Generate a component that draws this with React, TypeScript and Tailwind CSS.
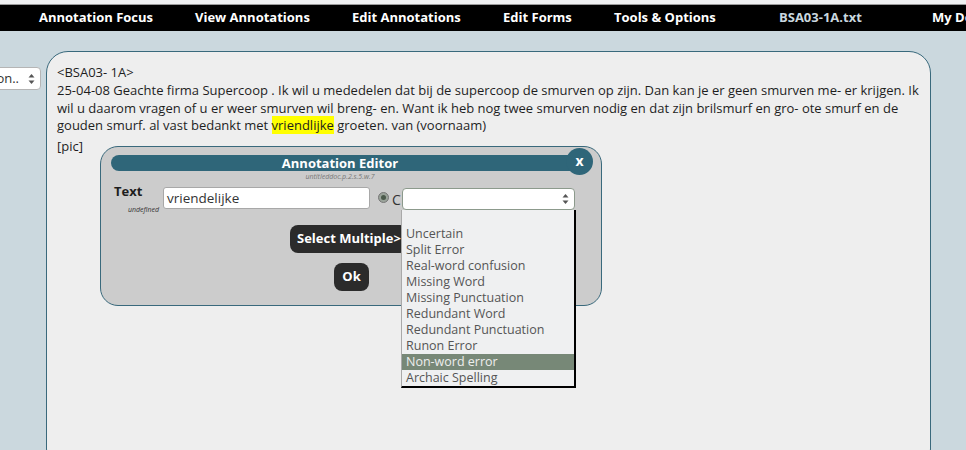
import React from 'react';

// setas do select (triângulo pra cima e pra baixo)
const Arrows = () => (
  <svg width="7" height="12" viewBox="0 0 7 12">
    <path d="M3.5 1 L6.5 4.5 L0.5 4.5 Z" fill="#555" />
    <path d="M3.5 11 L6.5 7.5 L0.5 7.5 Z" fill="#555" />
  </svg>
);

const navItems = [
  { label: 'Annotation Focus', w: 'w-[156px]', color: 'text-white' },
  { label: 'View Annotations', w: 'w-[157px]', color: 'text-white' },
  { label: 'Edit Annotations', w: 'w-[151px]', color: 'text-white' },
  { label: 'Edit Forms', w: 'w-[111px]', color: 'text-white' },
  { label: 'Tools & Options', w: 'w-[165px]', color: 'text-white' },
  { label: 'BSA03-1A.txt', w: 'w-[153px]', color: 'text-[#c9d7df]' },
  { label: 'My Documents', w: 'w-[120px]', color: 'text-white' },
];

const opcoes = [
  'Uncertain',
  'Split Error',
  'Real-word confusion',
  'Missing Word',
  'Missing Punctuation',
  'Redundant Word',
  'Redundant Punctuation',
  'Runon Error',
  'Non-word error',
  'Archaic Spelling',
];

export default function App() {
  return (
    <div className="relative w-[966px] h-[450px] overflow-hidden bg-[#cbd8de] text-[13px] text-[#1e1e1e] font-[family-name:'Open_Sans',sans-serif]">
      {/* barra de navegação */}
      <div className="h-[5px] bg-[#eff0f1] border-b border-[#9a9a9a]" />
      <div className="h-[26px] bg-black flex items-center pl-[39px] whitespace-nowrap overflow-hidden">
        {navItems.map((n) => (
          <div key={n.label} className={`${n.w} shrink-0 font-bold ${n.color}`}>
            {n.label}
          </div>
        ))}
      </div>

      <div className="flex">
        {/* coluna esquerda com o select cortado */}
        <div className="w-[46px] shrink-0 overflow-hidden pt-[36px]">
          <div className="ml-[-20px] w-[61px] h-[23px] bg-white border border-[#b5b5b5] rounded-[4px] flex items-center justify-end pr-[5px] gap-[9px] text-[#333]">
            <span>on..</span>
            <Arrows />
          </div>
        </div>

        {/* painel principal */}
        <div className="mt-[20px] w-[885px] h-[420px] shrink-0 bg-[#eeeeee] border border-[#39697c] rounded-[22px] pt-[11px] pl-[10px]">
          <div className="leading-[18px]">&lt;BSA03- 1A&gt;</div>
          <div className="leading-[17.5px] whitespace-nowrap mt-[1px]">
            <div>25-04-08 Geachte firma Supercoop . Ik wil u mededelen dat bij de supercoop de smurven op zijn. Dan kan je er geen smurven me- er krijgen. Ik</div>
            <div>wil u daarom vragen of u er weer smurven wil breng- en. Want ik heb nog twee smurven nodig en dat zijn brilsmurf en gro- ote smurf en de</div>
            <div>
              gouden smurf. al vast bedankt met <span className="bg-[#ffff00]">vriendlijke</span> groeten. van (voornaam)
            </div>
          </div>
          <div className="leading-[18px] mt-[2px]">[pic]</div>
        </div>
      </div>

      {/* editor de anotação (sobreposto) */}
      <div className="absolute left-[100px] top-[146px] w-[502px] h-[160px] bg-[#cccccc] border border-[#39697c] rounded-[18px] px-[10px] pt-[8px]">
        <div className="relative h-[16px] bg-[#2f6679] rounded-[8px] flex items-center justify-center pr-[22px]">
          <span className="text-white font-bold leading-none">Annotation Editor</span>
          <div className="absolute right-[-2px] top-[-7px] w-[27px] h-[27px] rounded-full bg-[#2f6679] flex items-center justify-center text-white font-bold text-[14px] leading-none pb-[2px]">
            x
          </div>
        </div>
        <div className="text-center pr-[22px] italic text-[7px] text-[#777] leading-[10px] mt-[1px]">untitleddoc.p.2.s.5.w.7</div>

        <div className="flex mt-[4px]">
          <div className="w-[52px] shrink-0 pl-[3px]">
            <div className="font-bold text-[13px] leading-[17px] mt-[-3px]">Text</div>
            <div className="italic text-[7px] text-[#333] text-right pr-[4px] mt-[5px]">undefined</div>
          </div>
          <div className="w-[207px] h-[22px] mt-[1px] bg-white border border-[#a8a8a8] rounded-[3px] flex items-center pl-[3px] text-[13.5px] text-[#333]">
            vriendelijke
          </div>
          <div className="ml-[8px] mt-[6px] w-[11px] h-[11px] rounded-full bg-[#9aa39a] border border-[#777] flex items-center justify-center">
            <div className="w-[5px] h-[5px] rounded-full bg-[#4b5a4b]" />
          </div>
          <div className="ml-[3px] mt-[3px] w-[9px] overflow-hidden text-[#333] text-[14px]">C</div>
        </div>

        <div className="flex flex-col items-start mt-[9px]">
          <div className="h-[28px] ml-[179px] bg-[#2b2b2b] rounded-[8px] text-white font-bold flex items-center px-[7px] whitespace-nowrap">
            Select Multiple&gt;
          </div>
          <div className="h-[28px] w-[35px] mt-[10px] ml-[223px] bg-[#2b2b2b] rounded-[8px] text-white font-bold flex items-center justify-center">
            Ok
          </div>
        </div>
      </div>

      {/* select aberto com a lista */}
      <div className="absolute left-[401px] top-[188px] w-[175px]">
        <div className="ml-[1px] w-[173px] h-[22px] bg-white border border-[#8c9a8c] rounded-[4px] flex items-center justify-end pr-[5px]">
          <Arrows />
        </div>
        <div className="w-[175px] bg-[#eff0f1] border-l border-l-[#a9a9a9] border-r-2 border-b-2 border-r-black border-b-black pt-[16px] text-[12.5px] text-[#555]">
          {opcoes.map((o) => (
            <div
              key={o}
              className={`h-[16px] leading-[16px] pl-[4px] whitespace-nowrap ${o === 'Non-word error' ? 'bg-[#778877] text-[#eeeeee]' : ''}`}
            >
              {o}
            </div>
          ))}
        </div>
      </div>
    </div>
  );
}
